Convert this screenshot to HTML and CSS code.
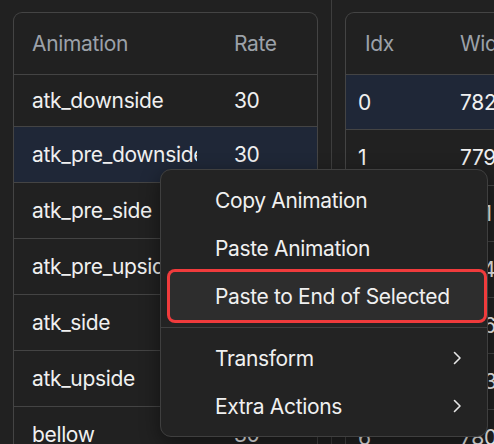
FILE: index.html
```html
<!DOCTYPE html>
<html>
<head>
<meta charset="utf-8">
<link rel="stylesheet" href="styles.css">
</head>
<body>
<div class="app">
  <div class="panel left">
    <div class="row head">
      <div class="cell name">Animation</div>
      <div class="cell rate">Rate</div>
    </div>
    <div class="row first">
      <div class="cell name">atk_downside</div>
      <div class="cell rate">30</div>
    </div>
    <div class="row selected">
      <div class="cell name">atk_pre_downside</div>
      <div class="cell rate">30</div>
    </div>
    <div class="row">
      <div class="cell name">atk_pre_side</div>
      <div class="cell rate">30</div>
    </div>
    <div class="row">
      <div class="cell name">atk_pre_upside</div>
      <div class="cell rate">30</div>
    </div>
    <div class="row">
      <div class="cell name">atk_side</div>
      <div class="cell rate">30</div>
    </div>
    <div class="row">
      <div class="cell name">atk_upside</div>
      <div class="cell rate">30</div>
    </div>
    <div class="row">
      <div class="cell name">bellow</div>
      <div class="cell rate">30</div>
    </div>
  </div>
  <div class="splitter"></div>
  <div class="panel right">
    <div class="row head">
      <div class="cell idx">Idx</div>
      <div class="cell wid">Width</div>
    </div>
    <div class="row selected">
      <div class="cell idx">0</div>
      <div class="cell wid">782</div>
    </div>
    <div class="row">
      <div class="cell idx">1</div>
      <div class="cell wid">779</div>
    </div>
    <div class="row">
      <div class="cell idx">2</div>
      <div class="cell wid">771</div>
    </div>
    <div class="row">
      <div class="cell idx">3</div>
      <div class="cell wid">774</div>
    </div>
    <div class="row">
      <div class="cell idx">4</div>
      <div class="cell wid">776</div>
    </div>
    <div class="row">
      <div class="cell idx">5</div>
      <div class="cell wid">783</div>
    </div>
    <div class="row">
      <div class="cell idx">6</div>
      <div class="cell wid">780</div>
    </div>
  </div>
</div>

<div class="menu">
  <div class="item">Copy Animation</div>
  <div class="item">Paste Animation</div>
  <div class="item active">Paste to End of Selected</div>
  <div class="sep"></div>
  <div class="item sub">Transform
    <svg class="chev" width="9" height="14" viewBox="0 0 9 14"><path d="M1.5 1.5 L7 7 L1.5 12.5" fill="none" stroke="#e6e6e6" stroke-width="1.6" stroke-linecap="round" stroke-linejoin="round"/></svg>
  </div>
  <div class="item sub">Extra Actions
    <svg class="chev" width="9" height="14" viewBox="0 0 9 14"><path d="M1.5 1.5 L7 7 L1.5 12.5" fill="none" stroke="#e6e6e6" stroke-width="1.6" stroke-linecap="round" stroke-linejoin="round"/></svg>
  </div>
</div>
</body>
</html>
```

FILE: styles.css
```css
html, body {
  margin: 0;
  padding: 0;
  background: #212121;
  height: 100%;
  overflow: hidden;
}

body {
  font-family: Inter, "Liberation Sans", sans-serif;
  font-size: 21px;
  letter-spacing: -0.35px;
  color: #f0f0f0;
  position: relative;
}

.app {
  display: flex;
  align-items: flex-start;
  padding: 12px 0 0 13px;
  height: 100%;
  box-sizing: border-box;
}

.panel {
  border: 1px solid #444;
  border-bottom: none;
  border-radius: 9px 9px 0 0;
  flex-shrink: 0;
  height: 500px;
  overflow: hidden;
}

.left {
  width: 305px;
  box-sizing: border-box;
}

.splitter {
  width: 1px;
  background: #3e3e3e;
  align-self: stretch;
  margin: -12px 13px 0 13px;
  flex-shrink: 0;
}

.right {
  width: 200px;
  box-sizing: border-box;
}

.row {
  display: flex;
  align-items: center;
  height: 56px;
  border-top: 1px solid #444;
  box-sizing: border-box;
}

.row.head {
  border-top: none;
  height: 61px;
  color: #9ca1a9;
}

.left .row.first {
  height: 52px;
}

.row.selected {
  background: #1f2737;
}

.cell {
  white-space: nowrap;
  overflow: hidden;
}

.name {
  width: 183px;
  padding-left: 18px;
  box-sizing: border-box;
  flex-shrink: 0;
}

.rate {
  padding-left: 37px;
}

.idx {
  width: 95px;
  padding-left: 12px;
  box-sizing: border-box;
  flex-shrink: 0;
}

.head .idx {
  padding-left: 19px;
}

.wid {
  padding-left: 19px;
}

.right .row.selected {
  height: 55px;
}

.menu {
  position: absolute;
  left: 160px;
  top: 169px;
  width: 328px;
  box-sizing: border-box;
  background: #232323;
  border: 1px solid #3f3f3f;
  border-radius: 11px;
  padding: 6px 0;
  box-shadow: 0 6px 20px rgba(0, 0, 0, 0.45);
}

.item {
  display: flex;
  align-items: center;
  justify-content: space-between;
  height: 48px;
  margin: 0 3px 0 9px;
  padding: 0 22px 0 45px;
  border-radius: 5px;
  color: #f0f0f0;
}

.item.active {
  background: #2d2d2d;
  box-shadow: 0 0 0 3px #f03b3c;
}

.sep {
  height: 1px;
  background: #3f3f3f;
  margin: 7px 0 6px;
}

.chev {
  display: block;
}
```
